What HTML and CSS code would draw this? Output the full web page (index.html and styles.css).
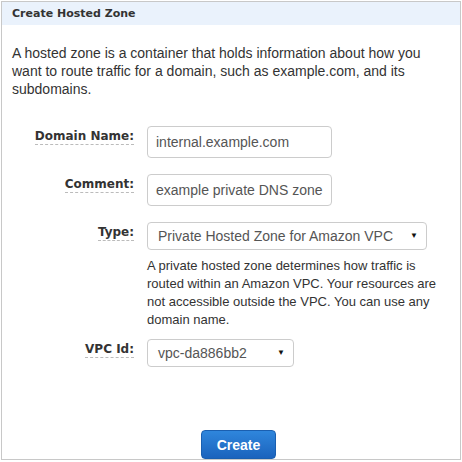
FILE: index.html
```html
<!DOCTYPE html>
<html>
<head>
<meta charset="utf-8">
<link rel="stylesheet" href="styles.css">
</head>
<body>
<div class="panel">
  <div class="panel-header">Create Hosted Zone</div>
  <p class="intro">A hosted zone is a container that holds information about how you want to route traffic for a domain, such as example.com, and its subdomains.</p>
  <div class="form">
    <div class="row row-domain">
      <div class="label-cell"><span class="label">Domain Name:</span></div>
      <div class="control-cell"><div class="input input-short">internal.example.com</div></div>
    </div>
    <div class="row row-comment">
      <div class="label-cell"><span class="label">Comment:</span></div>
      <div class="control-cell"><div class="input input-short">example private DNS zone</div></div>
    </div>
    <div class="row row-type">
      <div class="label-cell"><span class="label">Type:</span></div>
      <div class="control-cell">
        <div class="select select-type"><span>Private Hosted Zone for Amazon VPC</span><span class="arrow">&#9660;</span></div>
        <p class="help">A private hosted zone determines how traffic is<br>routed within an Amazon VPC. Your resources are<br>not accessible outside the VPC. You can use any<br>domain name.</p>
      </div>
    </div>
    <div class="row row-vpc">
      <div class="label-cell"><span class="label">VPC Id:</span></div>
      <div class="control-cell"><div class="select select-vpc"><span>vpc-da886bb2</span><span class="arrow">&#9660;</span></div></div>
    </div>
  </div>
  <div class="actions"><button class="btn">Create</button></div>
</div>
</body>
</html>
```
FILE: styles.css
```css
html, body {
  margin: 0;
  padding: 0;
  background: #fff;
}
body {
  font-family: "Liberation Sans", Arial, sans-serif;
  color: #333;
}
.panel {
  margin: 1px 0 0 1px;
  width: 460px;
  height: 459px;
  box-sizing: border-box;
  border: 1px solid #c8c8c8;
  position: relative;
}
.panel-header {
  height: 23px;
  background: #eaf2fc;
  font-family: "DejaVu Sans", Verdana, sans-serif;
  font-weight: bold;
  font-size: 11px;
  line-height: 23px;
  padding-left: 10px;
  color: #333;
}
.intro {
  margin: 19px 10px 0 10px;
  font-size: 14px;
  line-height: 18px;
  color: #333;
}
.form {
  margin-top: 28px;
}
.row {
  display: flex;
  margin-bottom: 16px;
}
.label-cell {
  width: 132px;
  text-align: right;
  flex: none;
}
.label {
  font-family: "DejaVu Sans", Verdana, sans-serif;
  font-weight: bold;
  font-size: 12px;
  line-height: 15px;
  color: #333;
  border-bottom: 1px dashed #bbb;
  display: inline-block;
}
.row-domain .label { margin-top: 3px; }
.row-comment .label { margin-top: 3px; }
.row-type .label { margin-top: 3px; }
.row-vpc .label { margin-top: 1px; }
.control-cell {
  margin-left: 13px;
}
.input {
  box-sizing: border-box;
  height: 32px;
  border: 1px solid #ccc;
  border-radius: 4px;
  padding: 0 8px;
  font-size: 14px;
  line-height: 30px;
  color: #555;
  white-space: nowrap;
  overflow: hidden;
}
.input-short { width: 185px; }
.select {
  box-sizing: border-box;
  height: 28px;
  border: 1px solid #ccc;
  border-radius: 4px;
  padding: 0 8px 0 10px;
  font-size: 14px;
  line-height: 26px;
  color: #555;
  display: flex;
  justify-content: space-between;
  white-space: nowrap;
}
.arrow {
  font-size: 8px;
  color: #111;
}
.select-type { width: 280px; }
.select-vpc { width: 147px; }
.help {
  margin: 7px 0 0 0;
  font-size: 13px;
  line-height: 18px;
  width: 300px;
  white-space: nowrap;
  color: #333;
}
.row-type { margin-bottom: 10px; }
.actions {
  position: absolute;
  left: 199px;
  bottom: 0;
}
.btn {
  box-sizing: border-box;
  width: 75px;
  height: 29px;
  border: 1px solid #1a5fb0;
  border-radius: 4px;
  background: linear-gradient(#2f86dc, #1b63bd);
  color: #fff;
  font-family: "Liberation Sans", Arial, sans-serif;
  font-weight: bold;
  font-size: 14px;
  padding: 0;
  display: block;
}
```
